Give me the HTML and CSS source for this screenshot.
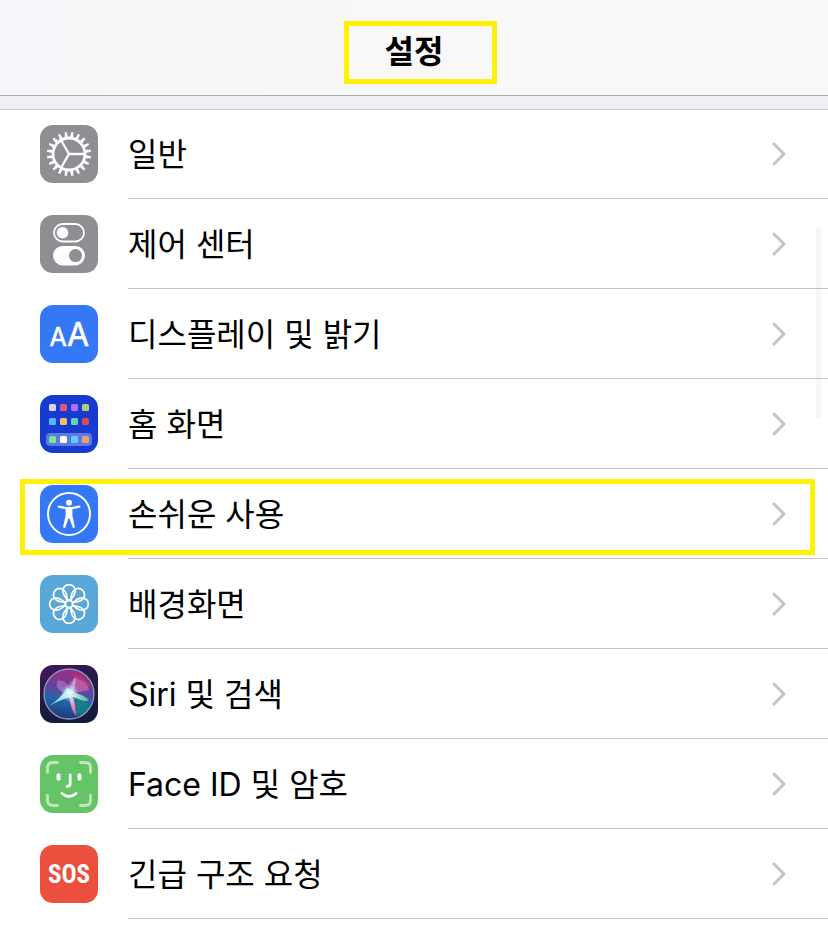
FILE: index.html
```html
<!DOCTYPE html>
<html lang="ko">
<head>
    <meta charset="UTF-8">
    <meta name="viewport" content="width=device-width, initial-scale=1.0">
    <title>설정</title>
    <link rel="stylesheet" href="styles.css">
</head>
<body>
    <header class="navbar">
        <h1 class="navbar-title">설정</h1>
    </header>

    <nav class="settings-list">
        <a class="row" href="#general">
            <svg class="icon icon-gray" viewBox="0 0 58 58" fill="none" stroke="#fff" aria-hidden="true">
                <circle cx="29" cy="29" r="16" stroke-width="2.8"/>
                <circle cx="29" cy="29" r="18.3" stroke-width="2.6" pathLength="200" stroke-dasharray="5 5" stroke-dashoffset="-2.5"/>
                <circle cx="29" cy="29" r="20.7" stroke-width="2.8" pathLength="200" stroke-dasharray="3.6 6.4" stroke-dashoffset="-3.2"/>
                <path d="M29 29H44M29 29L21.5 16M29 29L21.5 42" stroke-width="2.3"/>
            </svg>
            <span class="row-body">
                <span class="row-label">일반</span>
                <svg class="chevron" viewBox="0 0 14 24" aria-hidden="true"><path d="M2 2L12 12L2 22"/></svg>
            </span>
        </a>

        <a class="row" href="#control-center">
            <svg class="icon icon-gray" viewBox="0 0 58 58" aria-hidden="true">
                <rect x="14" y="9" width="30" height="17.5" rx="8.75" fill="none" stroke="#fff" stroke-width="1.8"/>
                <circle cx="22.5" cy="17.7" r="5.8" fill="#fff"/>
                <rect x="13" y="31" width="32" height="19.4" rx="9.7" fill="#fff"/>
                <circle cx="35.5" cy="40.6" r="6.5" fill="#8e8e93"/>
            </svg>
            <span class="row-body">
                <span class="row-label">제어 센터</span>
                <svg class="chevron" viewBox="0 0 14 24" aria-hidden="true"><path d="M2 2L12 12L2 22"/></svg>
            </span>
        </a>

        <a class="row" href="#display">
            <svg class="icon icon-blue" viewBox="0 0 58 58" aria-hidden="true">
                <text class="icon-letters" x="18" y="41" font-size="25">A</text>
                <text class="icon-letters" x="38" y="41" font-size="32">A</text>
            </svg>
            <span class="row-body">
                <span class="row-label">디스플레이 및 밝기</span>
                <svg class="chevron" viewBox="0 0 14 24" aria-hidden="true"><path d="M2 2L12 12L2 22"/></svg>
            </span>
        </a>

        <a class="row" href="#home-screen">
            <svg class="icon icon-home" viewBox="0 0 58 58" aria-hidden="true">
                <rect x="6" y="38" width="46" height="13" rx="4" fill="#5b7be0"/>
                <rect x="9" y="9" width="7" height="7" rx="1.5" fill="#d5d6e2"/>
                <rect x="20" y="9" width="7" height="7" rx="1.5" fill="#e0596f"/>
                <rect x="31" y="9" width="7" height="7" rx="1.5" fill="#a971fb"/>
                <rect x="42" y="9" width="7" height="7" rx="1.5" fill="#b2cd70"/>
                <rect x="9" y="23" width="7" height="7" rx="1.5" fill="#55b5f7"/>
                <rect x="20" y="23" width="7" height="7" rx="1.5" fill="#f0bd62"/>
                <rect x="31" y="23" width="7" height="7" rx="1.5" fill="#6bcdb9"/>
                <rect x="42" y="23" width="7" height="7" rx="1.5" fill="#e0484d"/>
                <rect x="9" y="41" width="7" height="7" rx="1.5" fill="#7be495"/>
                <rect x="20" y="41" width="7" height="7" rx="1.5" fill="#fff"/>
                <rect x="31" y="41" width="7" height="7" rx="1.5" fill="#66c5fa"/>
                <rect x="42" y="41" width="7" height="7" rx="1.5" fill="#e9a06c"/>
            </svg>
            <span class="row-body">
                <span class="row-label">홈 화면</span>
                <svg class="chevron" viewBox="0 0 14 24" aria-hidden="true"><path d="M2 2L12 12L2 22"/></svg>
            </span>
        </a>

        <a class="row row-marked" href="#accessibility">
            <svg class="icon icon-blue" viewBox="0 0 58 58" aria-hidden="true">
                <circle cx="29" cy="29" r="21" fill="none" stroke="#fff" stroke-width="2"/>
                <circle cx="29" cy="17.7" r="3" fill="#fff"/>
                <path d="M19 20.6L26.5 22H31.5L39 20.6Q40.5 20.6 40.4 21.8Q40.3 22.6 39.4 22.8L32.4 24.3V30.5L34.8 41.5Q34.9 42.7 34 43Q33 43.2 32.6 42.2L29.6 33.5H28.4L25.4 42.2Q25 43.2 24 43Q23.1 42.7 23.2 41.5L25.6 30.5V24.3L18.6 22.8Q17.7 22.6 17.6 21.8Q17.5 20.6 19 20.6Z" fill="#fff"/>
            </svg>
            <span class="row-body">
                <span class="row-label">손쉬운 사용</span>
                <svg class="chevron" viewBox="0 0 14 24" aria-hidden="true"><path d="M2 2L12 12L2 22"/></svg>
            </span>
        </a>

        <a class="row" href="#wallpaper">
            <svg class="icon icon-sky" viewBox="0 0 58 58" fill="none" stroke="#fff" stroke-width="1.7" aria-hidden="true">
                <defs>
                    <path id="petal" d="M28.5 25.5Q23 21 22.8 15.8A6.2 6.2 0 0 1 35.2 15.8Q35 21 29.5 25.5"/>
                </defs>
                <use href="#petal"/>
                <use href="#petal" transform="rotate(45 29 29)"/>
                <use href="#petal" transform="rotate(90 29 29)"/>
                <use href="#petal" transform="rotate(135 29 29)"/>
                <use href="#petal" transform="rotate(180 29 29)"/>
                <use href="#petal" transform="rotate(225 29 29)"/>
                <use href="#petal" transform="rotate(270 29 29)"/>
                <use href="#petal" transform="rotate(315 29 29)"/>
                <circle cx="29" cy="29" r="3.6"/>
            </svg>
            <span class="row-body">
                <span class="row-label">배경화면</span>
                <svg class="chevron" viewBox="0 0 14 24" aria-hidden="true"><path d="M2 2L12 12L2 22"/></svg>
            </span>
        </a>

        <a class="row" href="#siri">
            <svg class="icon icon-siri" viewBox="0 0 58 58" aria-hidden="true">
                <defs>
                    <linearGradient id="orb" x1="0.6" y1="0" x2="0.4" y2="1">
                        <stop offset="0" stop-color="#a52a84"/>
                        <stop offset="0.4" stop-color="#66429a"/>
                        <stop offset="0.65" stop-color="#2267a8"/>
                        <stop offset="1" stop-color="#203579"/>
                    </linearGradient>
                    <radialGradient id="glow">
                        <stop offset="0" stop-color="#fff"/>
                        <stop offset="0.35" stop-color="#c9f6f8" stop-opacity="0.8"/>
                        <stop offset="1" stop-color="#a8d9f5" stop-opacity="0"/>
                    </radialGradient>
                    <linearGradient id="teal" x1="0" x2="1">
                        <stop offset="0" stop-color="#56dceb"/>
                        <stop offset="0.5" stop-color="#fff"/>
                        <stop offset="1" stop-color="#3fc5ae"/>
                    </linearGradient>
                    <linearGradient id="pink" x1="0" y1="0" x2="0" y2="1">
                        <stop offset="0" stop-color="#f5ecff"/>
                        <stop offset="1" stop-color="#e04fae"/>
                    </linearGradient>
                </defs>
                <circle cx="29" cy="29" r="25" fill="url(#orb)"/>
                <path d="M29 29Q46 27 50 20Q43 10 31 8Q40 18 29 29" fill="#d2395e" opacity="0.5"/>
                <path d="M30 29Q43 29 50 42Q43 50 35 51Q37 40 30 29" fill="#16867f" opacity="0.7"/>
                <path d="M30 28Q15 27 17 17Q21 13 28 20Q35 10 38 14Q48 17 49 25Q43 27 30 28" fill="#c77bcb" opacity="0.5"/>
                <path d="M30 28Q20 22 18 14Q14 24 24 28L15 32" fill="#8779d0" opacity="0.5"/>
                <path d="M9 41Q21 33 27 23Q31 24 35 28Q44 30 49 35Q46 38 34 32Q25 32 9 41Z" fill="url(#teal)" opacity="0.9"/>
                <path d="M28 27Q35 31 36 50Q32 49 28 27Z" fill="url(#pink)"/>
                <path d="M29 28Q31 19 35 12Q37 19 32 29Z" fill="#e5c9f4" opacity="0.6"/>
                <circle cx="30" cy="28" r="9" fill="url(#glow)"/>
                <circle cx="29" cy="29" r="25" fill="none" stroke="#a4b2d1" stroke-width="1.3" opacity="0.8"/>
            </svg>
            <span class="row-body">
                <span class="row-label">Siri 및 검색</span>
                <svg class="chevron" viewBox="0 0 14 24" aria-hidden="true"><path d="M2 2L12 12L2 22"/></svg>
            </span>
        </a>

        <a class="row" href="#face-id">
            <svg class="icon icon-green" viewBox="0 0 58 58" fill="none" stroke="#fff" stroke-linecap="round" aria-hidden="true">
                <path d="M7.5 17.5V13Q7.5 7.5 13 7.5H17.5M40.5 7.5H45Q50.5 7.5 50.5 13V17.5M50.5 40.5V45Q50.5 50.5 45 50.5H40.5M17.5 50.5H13Q7.5 50.5 7.5 45V40.5" stroke-width="2.8" opacity="0.6"/>
                <path d="M18.5 20.3V23.7M39.5 20.3V23.7" stroke-width="4"/>
                <path d="M30.2 20V28.5Q30.2 31.5 27 31.5" stroke-width="2.8"/>
                <path d="M22 38.5Q29 44.5 36 38.5" stroke-width="2.8"/>
            </svg>
            <span class="row-body">
                <span class="row-label">Face ID 및 암호</span>
                <svg class="chevron" viewBox="0 0 14 24" aria-hidden="true"><path d="M2 2L12 12L2 22"/></svg>
            </span>
        </a>

        <a class="row" href="#sos">
            <span class="icon icon-red">SOS</span>
            <span class="row-body">
                <span class="row-label">긴급 구조 요청</span>
                <svg class="chevron" viewBox="0 0 14 24" aria-hidden="true"><path d="M2 2L12 12L2 22"/></svg>
            </span>
        </a>
    </nav>

    <div class="scroll-thumb"></div>
</body>
</html>
```

FILE: styles.css
```css
* {
    box-sizing: border-box;
}

body {
    margin: 0;
    font-family: Inter, "Noto Sans CJK KR", sans-serif;
    background-color: #fff;
    color: #000;
}

.navbar {
    display: flex;
    justify-content: center;
    align-items: center;
    height: 96px;
    padding-top: 8px;
    background: linear-gradient(to right, #f6f6fa, #f8f8f8 40%, #f9f9f9);
    border-bottom: 1px solid #adadb0;
}

.navbar-title {
    position: relative;
    margin: 0;
    font-size: 32px;
    line-height: 48px;
    font-weight: 600;
}

/* Yellow marker around the title */
.navbar-title::after {
    content: "";
    position: absolute;
    top: -7px;
    bottom: -8px;
    left: -41px;
    right: -54px;
    border: 5px solid #fff200;
}

.settings-list {
    margin-top: 13px;
    box-shadow: 0 -13px 0 #efeff4, inset 0 1px 0 #c8c7cc;
}

.row {
    position: relative;
    display: flex;
    align-items: stretch;
    gap: 30px;
    height: 90px;
    padding-left: 40px;
    color: inherit;
    text-decoration: none;
}

/* Yellow marker around the highlighted row */
.row-marked::after {
    content: "";
    position: absolute;
    top: 10px;
    right: 13px;
    bottom: 4px;
    left: 20px;
    border: 5px solid #fff200;
}

.row-body {
    flex: 1;
    display: flex;
    justify-content: space-between;
    align-items: center;
    padding-right: 42px;
    border-bottom: 1px solid #c4c4c6;
}

.row-label {
    padding-top: 3px;
    font-size: 32px;
    line-height: 48px;
}

.icon {
    flex: none;
    width: 58px;
    height: 58px;
    margin-top: 16px;
    border-radius: 13px;
}

.icon-gray {
    background-color: #8e8e93;
}

.icon-blue {
    background-color: #3478f6;
}

.icon-home {
    background-color: #173bd0;
}

.icon-sky {
    background-color: #59a6d8;
}

.icon-siri {
    background: linear-gradient(160deg, #43185e, #1c1c43 50%, #101c38);
}

.icon-green {
    background-color: #65c466;
}

.icon-red {
    background-color: #eb4f3d;
    color: #fff;
    font-family: "Liberation Sans Narrow", "Roboto Condensed", "Open Sans Condensed", Roboto, sans-serif;
    font-size: 25px;
    font-weight: 700;
    line-height: 60px;
    text-align: center;
}

.icon-letters {
    fill: #fff;
    stroke: #fff;
    stroke-width: 0.6;
    stroke-linejoin: round;
    text-anchor: middle;
}

.chevron {
    width: 14px;
    height: 24px;
    fill: none;
    stroke: #c4c4c6;
    stroke-width: 3;
    stroke-linecap: round;
    stroke-linejoin: round;
}

.scroll-thumb {
    position: absolute;
    top: 227px;
    right: 6px;
    width: 6px;
    height: 192px;
    border-radius: 3px;
    background-color: rgba(0, 0, 0, 0.03);
}
```
